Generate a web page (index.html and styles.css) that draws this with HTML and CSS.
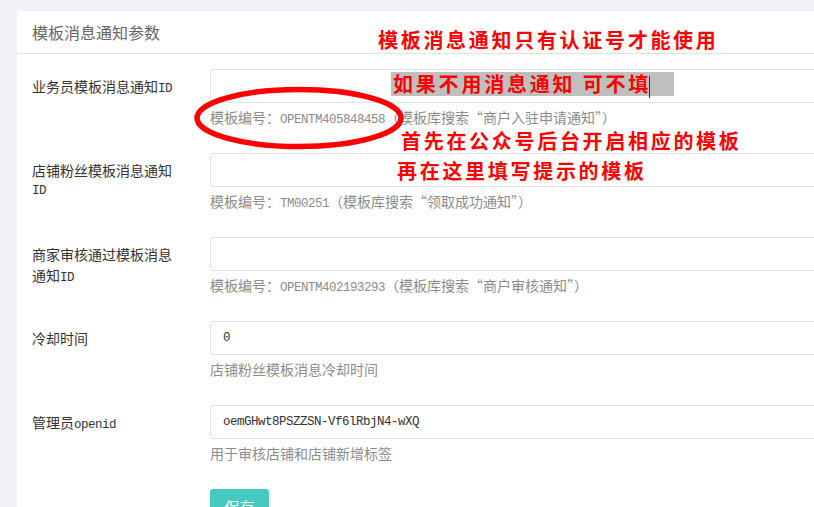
FILE: index.html
```html
<html>
<head>
  <meta charset="utf-8">
  <link rel="stylesheet" href="styles.css">
</head>
<body>
  <div class="panel">
    <div class="panel-heading">模板消息通知参数</div>
    <div class="panel-body">
      <div class="form-group">
        <label class="form-label">业务员模板消息通知<span class="mono">ID</span></label>
        <div class="form-field">
          <div class="form-input"></div>
          <div class="help">模板编号：<span class="mono">OPENTM405848458</span>（模板库搜索“商户入驻申请通知”）</div>
        </div>
      </div>
      <div class="form-group">
        <label class="form-label">店铺粉丝模板消息通知<span class="mono">ID</span></label>
        <div class="form-field">
          <div class="form-input"></div>
          <div class="help">模板编号：<span class="mono">TM00251</span>（模板库搜索“领取成功通知”）</div>
        </div>
      </div>
      <div class="form-group">
        <label class="form-label">商家审核通过模板消息通知<span class="mono">ID</span></label>
        <div class="form-field">
          <div class="form-input"></div>
          <div class="help">模板编号：<span class="mono">OPENTM402193293</span>（模板库搜索“商户审核通知”）</div>
        </div>
      </div>
      <div class="form-group">
        <label class="form-label">冷却时间</label>
        <div class="form-field">
          <div class="form-input"><span class="mono">0</span></div>
          <div class="help">店铺粉丝模板消息冷却时间</div>
        </div>
      </div>
      <div class="form-group">
        <label class="form-label">管理员<span class="mono">openid</span></label>
        <div class="form-field">
          <div class="form-input"><span class="mono">oemGHwt8PSZZSN-Vf6lRbjN4-wXQ</span></div>
          <div class="help">用于审核店铺和店铺新增标签</div>
        </div>
      </div>
      <div class="form-group">
        <div class="form-label"></div>
        <div class="form-field">
          <button class="btn-save">保存</button>
        </div>
      </div>
    </div>
  </div>

  <!-- annotations drawn over the screenshot -->
  <div class="note note-top">模板消息通知只有认证号才能使用</div>
  <div class="note note-mark">如果不用消息通知 可不填<span class="caret"></span></div>
  <div class="note note-first">首先在公众号后台开启相应的模板</div>
  <div class="note note-second">再在这里填写提示的模板</div>
  <svg class="ring" width="214" height="66" viewBox="0 0 214 66">
    <ellipse cx="107" cy="33" rx="102" ry="28.5" fill="none" stroke="#ff0000" stroke-width="5.5"/>
  </svg>
</body>
</html>
```

FILE: styles.css
```css
html, body {
  overflow: hidden;
}

body {
  margin: 0;
  padding: 11px 0 0 17px;
  background-color: #f0f1f6;
  font-family: "Noto Sans CJK SC", sans-serif;
  font-size: 14px;
  color: #333333;
}

.mono {
  font-family: "Liberation Mono", monospace;
  font-size: 12.5px;
  letter-spacing: -0.5px;
}

.panel {
  width: 1100px;
  background-color: #ffffff;
}

.panel-heading {
  height: 42px;
  line-height: 42px;
  padding-left: 15px;
  font-size: 16px;
  color: #666666;
  border-bottom: 1px solid #e2e2e2;
}

.panel-body {
  padding: 15px 15px 0 15px;
}

.form-group {
  display: flex;
  height: 58px;
  margin-bottom: 26px;
}

.form-label {
  width: 146px;
  flex: none;
  padding: 7px 32px 0 0;
  line-height: 21px;
}

.form-field {
  flex: 1;
}

.form-input {
  height: 32px;
  line-height: 32px;
  padding-left: 12px;
  border: 1px solid #e2e2e2;
  border-radius: 3px;
  color: #333333;
  overflow: hidden;
}

.help {
  height: 20px;
  margin-top: 4px;
  line-height: 20px;
  color: #8c8c8c;
  overflow: hidden;
}

.btn-save {
  width: 59px;
  height: 34px;
  border: none;
  border-radius: 3px;
  background-color: #44cabf;
  color: #ffffff;
  font-family: "Noto Sans CJK SC", sans-serif;
  font-size: 15px;
}

.note {
  position: absolute;
  color: #ff0000;
  font-weight: bold;
  font-size: 20px;
  line-height: 24px;
  letter-spacing: 2.7px;
  white-space: nowrap;
}

.note-top {
  left: 378px;
  top: 28px;
}

.note-mark {
  left: 391px;
  top: 72px;
  width: 281px;
  height: 24px;
  padding-left: 2px;
  background-color: #bfbfbf;
  letter-spacing: 2.8px;
}

.caret {
  display: inline-block;
  width: 1px;
  height: 22px;
  margin-left: -2px;
  vertical-align: middle;
  background-color: #333333;
}

.note-first {
  left: 401px;
  top: 129px;
}

.note-second {
  left: 397px;
  top: 159px;
}

.ring {
  position: absolute;
  left: 192px;
  top: 85px;
}
```
